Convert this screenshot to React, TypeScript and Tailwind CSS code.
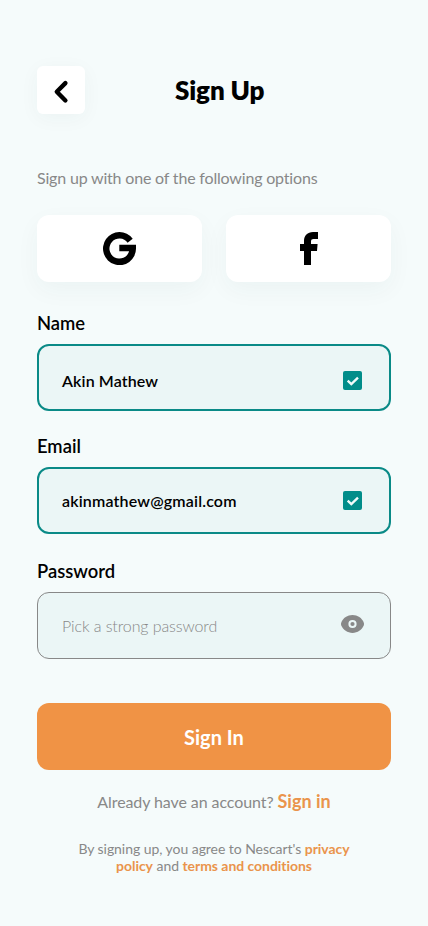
import React from 'react';

function BackIcon() {
  return (
    <svg width="48" height="48" viewBox="0 0 48 48" fill="none" stroke="#000" strokeWidth="4.4" strokeLinecap="round" strokeLinejoin="round">
      <path d="M28.4 17.1L19.8 25.7L28.4 34.5" />
    </svg>
  );
}

function GoogleIcon() {
  return (
    <svg width="33" height="33" viewBox="0 0 33 33">
      <path d="M29.7 6.7A16.5 16.5 0 1 0 33 16.5V12.8H16.3V19.2H26.1A10 10 0 1 1 24.6 10.8Z" />
    </svg>
  );
}

function FacebookIcon() {
  return (
    <svg width="18" height="33" viewBox="0 0 18 33">
      <path d="M18 0H13C7.5 0 4 3.5 4 8.8V12H0V19H4V33H11V19H17L17.6 12H11V9.5C11 7.8 11.8 7 13.5 7H18Z" />
    </svg>
  );
}

function CheckIcon() {
  return (
    <svg width="19" height="19" viewBox="0 0 19 19">
      <rect width="19" height="19" rx="2" fill="#018d8a" />
      <path d="M4.7 9.6L8.3 13L15 6.7" fill="none" stroke="#f0fafa" strokeWidth="2.4" />
    </svg>
  );
}

function EyeIcon() {
  return (
    <svg width="23" height="18" viewBox="0 0 23 18">
      <path d="M11.5 0C6.5 0 2 3 0.3 7.4C-0.1 8.5 -0.1 9.5 0.3 10.6C2 15 6.5 18 11.5 18S21 15 22.7 10.6C23.1 9.5 23.1 8.5 22.7 7.4C21 3 16.5 0 11.5 0Z" fill="#888888" />
      <circle cx="11.5" cy="9" r="3.1" fill="none" stroke="#ebf6f6" strokeWidth="2" />
    </svg>
  );
}

const label = 'text-[18.4px] leading-[22px] font-semibold text-black';
const social = 'flex h-[67px] w-[165px] items-center justify-center rounded-xl bg-white shadow-[0_8px_24px_rgba(0,60,60,0.045)]';

export default function App() {
  return (
    <main className="h-[926px] w-[428px] overflow-hidden bg-[#f5fbfb] px-[37px] pt-[66px] font-['Lato',sans-serif] [font-variant-ligatures:none]">
      <header className="flex h-12 items-center">
        <button className="h-12 w-12 rounded-md bg-white shadow-[0_4px_20px_rgba(0,60,60,0.045)]">
          <BackIcon />
        </button>
        <h1 className="ml-[90px] text-[26px] leading-8 font-extrabold tracking-[-0.12px] text-black">Sign Up</h1>
      </header>

      <p className="mt-[54px] text-[16px] leading-5 tracking-[-0.18px] text-[#888888]">Sign up with one of the following options</p>
      <div className="mt-[27px] flex justify-between">
        <button className={social}><GoogleIcon /></button>
        <button className={social}><FacebookIcon /></button>
      </div>

      <div className={`mt-[30px] ${label}`}>Name</div>
      <div className="mt-[10px] flex h-[67px] items-center justify-between rounded-xl border-2 border-[#0a8a87] bg-[#ebf6f6] pt-[6px] pr-[27px] pl-[23px] text-[16px] leading-5 font-semibold tracking-[0.12px]">
        <span>Akin Mathew</span>
        <CheckIcon />
      </div>

      <div className={`mt-[24px] ${label}`}>Email</div>
      <div className="mt-[10px] flex h-[67px] items-center justify-between rounded-xl border-2 border-[#0a8a87] bg-[#ebf6f6] pr-[27px] pl-[23px] text-[16px] leading-5 font-semibold tracking-[0.17px]">
        <span>akinmathew@gmail.com</span>
        <CheckIcon />
      </div>

      <div className={`mt-[26px] ${label}`}>Password</div>
      <div className="mt-[10px] flex h-[67px] items-center justify-between rounded-xl border border-[#888888] bg-[#ebf6f6] pr-[26px] pl-[24px] text-[16px] leading-5 font-light tracking-[-0.1px] text-[#888888]">
        <span>Pick a strong password</span>
        <div className="pb-[3px]"><EyeIcon /></div>
      </div>

      <button className="mt-[44px] flex h-[67px] w-full items-center justify-center rounded-xl bg-[#f09345] text-[20px] font-bold text-white">Sign In</button>

      <p className="mt-[19px] text-center text-[16px] leading-6 tracking-[-0.09px] text-[#888888]">
        Already have an account? <span className="text-[18px] font-bold tracking-normal text-[#ea944c]">Sign in</span>
      </p>
      <p className="mt-[26px] text-center text-[14px] leading-[17px] tracking-[-0.05px] text-[#888888]">
        By signing up, you agree to Nescart's <span className="font-bold text-[#ea944c]">privacy<br />policy</span> and <span className="font-bold text-[#ea944c]">terms and conditions</span>
      </p>
    </main>
  );
}
